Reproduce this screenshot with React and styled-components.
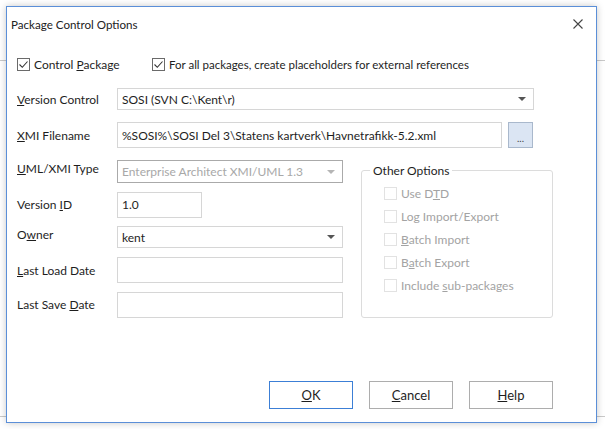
import React from 'react'
import styled, { createGlobalStyle } from 'styled-components'

const Global = createGlobalStyle`
  html, body { margin: 0; padding: 0; background: #fff; }
  body {
    font-family: Lato, "Liberation Sans", Arial, sans-serif;
    font-size: 12px;
    color: #1e1e1e;
  }
`

const Page = styled.div`
  width: 605px;
  height: 429px;
  box-sizing: border-box;
  padding: 6px 0 0 6px;
  overflow: hidden;
  background:
    linear-gradient(#c9c9c9, #c9c9c9) 0 60px / 100% 1px no-repeat,
    linear-gradient(#c9c9c9, #c9c9c9) 0 416px / 100% 1px no-repeat,
    #fff;
`

const Dialog = styled.div`
  width: 591px;
  height: 417px;
  box-sizing: border-box;
  border: 1px solid #5b8fd8;
  background: #fff;
  box-shadow: 0 0 7px rgba(0, 0, 0, 0.22);
  display: flex;
  flex-direction: column;
`

const TitleBar = styled.div`
  height: 34px;
  display: flex;
  align-items: center;
  justify-content: space-between;
  padding: 0 13px 0 4px;
  font-size: 11.6px;
  color: #222;
`

const Close = styled.button`
  border: 0;
  background: none;
  padding: 0;
  width: 10px;
  height: 10px;
  display: flex;
`

const Body = styled.div`
  flex: 1;
  padding: 15px 0 0 10px;
  display: flex;
  flex-direction: column;
`

const CheckRow = styled.div`
  display: flex;
  height: 16px;
  align-items: center;
`

const Check = styled.label`
  display: flex;
  align-items: center;
  gap: 4px;
  width: ${p => (p.$w ? `${p.$w}px` : 'auto')};
  font-size: ${p => p.$size || 12}px;
  color: ${p => (p.$disabled ? '#a3a3a3' : '#1e1e1e')};
  white-space: nowrap;
`

const Square = styled.span`
  width: 13px;
  height: 13px;
  flex: none;
  box-sizing: border-box;
  border: 1px solid ${p => (p.$disabled ? '#e2e2e2' : '#6a6a6a')};
  background: #fff;
  display: flex;
  align-items: center;
  justify-content: center;
`

const Form = styled.div`
  display: grid;
  grid-template-columns: 100px auto;
  align-items: center;
  row-gap: ${p => p.$gap}px;
  margin-top: ${p => p.$top}px;
`

const Label = styled.div`
  white-space: nowrap;
  margin-top: ${p => (p.$lift ? -6 : 0)}px;
`

const FieldLine = styled.div`
  display: flex;
  gap: 6px;
  align-items: center;
`

const Box = styled.div`
  box-sizing: border-box;
  width: ${p => p.$w}px;
  height: ${p => p.$h}px;
  border: 1px solid ${p => (p.$disabled ? '#aaa' : '#d6d6d6')};
  background: #fff;
  display: flex;
  align-items: center;
  justify-content: space-between;
  padding: 0 7px 0 4px;
  color: ${p => (p.$disabled ? '#a8a8a8' : '#1e1e1e')};
  white-space: nowrap;
  overflow: hidden;
`

const Arrow = styled.span`
  width: 0;
  height: 0;
  border-left: 4px solid transparent;
  border-right: 4px solid transparent;
  border-top: 4px solid ${p => (p.$disabled ? '#b5b5b5' : '#555')};
`

const Browse = styled.button`
  width: 25px;
  height: 26px;
  box-sizing: border-box;
  border: 1px solid #a9b8cc;
  background: #dbe5f3;
  font: inherit;
  font-size: 10px;
  color: #444;
  padding: 6px 0 0;
`

const Split = styled.div`
  display: flex;
  margin-top: 12px;
`

const Group = styled.fieldset`
  box-sizing: border-box;
  width: 192px;
  height: 155px;
  margin: 3px 0 0 18px;
  padding: 0 0 0 2px;
  border: 1px solid #dcdcdc;
  border-radius: 3px;

  legend {
    margin-left: 6px;
    padding: 0 3px;
    color: #1e1e1e;
  }
`

const GroupList = styled.div`
  display: flex;
  flex-direction: column;
  gap: 8px;
  padding: 8px 0 0 20px;

  & > label {
    height: 15px;
  }
`

const Buttons = styled.div`
  display: flex;
  gap: 16px;
  margin: 63px 0 0 252px;
`

const Button = styled.button`
  width: 84px;
  height: 28px;
  box-sizing: border-box;
  border: 1px solid ${p => (p.$default ? '#3c7fd6' : '#adadad')};
  background: #fff;
  font: inherit;
  font-size: 13px;
  color: #1e1e1e;
`

const Tick = () => (
  <svg width="11" height="11" viewBox="0 0 11 11">
    <path d="M1.5 5.5 L4.3 8.3 L9.5 2.5" fill="none" stroke="#333" strokeWidth="1.1" />
  </svg>
)

export default function App() {
  return (
    <Page>
      <Global />
      <Dialog>
        <TitleBar>
          <span>Package Control Options</span>
          <Close>
            <svg width="10" height="10" viewBox="0 0 10 10">
              <path d="M0.5 0.5 L9.5 9.5 M9.5 0.5 L0.5 9.5" stroke="#444" strokeWidth="1.1" />
            </svg>
          </Close>
        </TitleBar>
        <Body>
          <CheckRow>
            <Check $w={135}><Square><Tick /></Square><span>Control <u>P</u>ackage</span></Check>
            <Check $size={11.5}><Square><Tick /></Square><span>For all packages, create placeholders for external references</span></Check>
          </CheckRow>

          <Form $top={16} $gap={12}>
            <Label><u>V</u>ersion Control</Label>
            <Box $w={417} $h={22}>SOSI (SVN C:\Kent\r)<Arrow /></Box>
            <Label><u>X</u>MI Filename</Label>
            <FieldLine>
              <Box $w={385} $h={26}>%SOSI%\SOSI Del 3\Statens kartverk\Havnetrafikk-5.2.xml</Box>
              <Browse>...</Browse>
            </FieldLine>
          </Form>

          <Split>
            <Form $top={0} $gap={8}>
              <Label $lift><u>U</u>ML/XMI Type</Label>
              <Box $w={226} $h={23} $disabled>Enterprise Architect XMI/UML 1.3<Arrow $disabled /></Box>
              <Label>Version <u>I</u>D</Label>
              <Box $w={85} $h={26}>1.0</Box>
              <Label $lift>O<u>w</u>ner</Label>
              <Box $w={226} $h={22}>kent<Arrow /></Box>
              <Label><u>L</u>ast Load Date</Label>
              <Box $w={226} $h={26} />
              <Label>Last Save <u>D</u>ate</Label>
              <Box $w={226} $h={26} />
            </Form>

            <Group>
              <legend>Other Options</legend>
              <GroupList>
                <Check $disabled><Square $disabled /><span>Use D<u>T</u>D</span></Check>
                <Check $disabled><Square $disabled /><span>Lo<u>g</u> Import/Export</span></Check>
                <Check $disabled><Square $disabled /><span><u>B</u>atch Import</span></Check>
                <Check $disabled><Square $disabled /><span>B<u>a</u>tch Export</span></Check>
                <Check $disabled><Square $disabled /><span>Include <u>s</u>ub-packages</span></Check>
              </GroupList>
            </Group>
          </Split>

          <Buttons>
            <Button $default><u>O</u>K</Button>
            <Button><u>C</u>ancel</Button>
            <Button><u>H</u>elp</Button>
          </Buttons>
        </Body>
      </Dialog>
    </Page>
  )
}
